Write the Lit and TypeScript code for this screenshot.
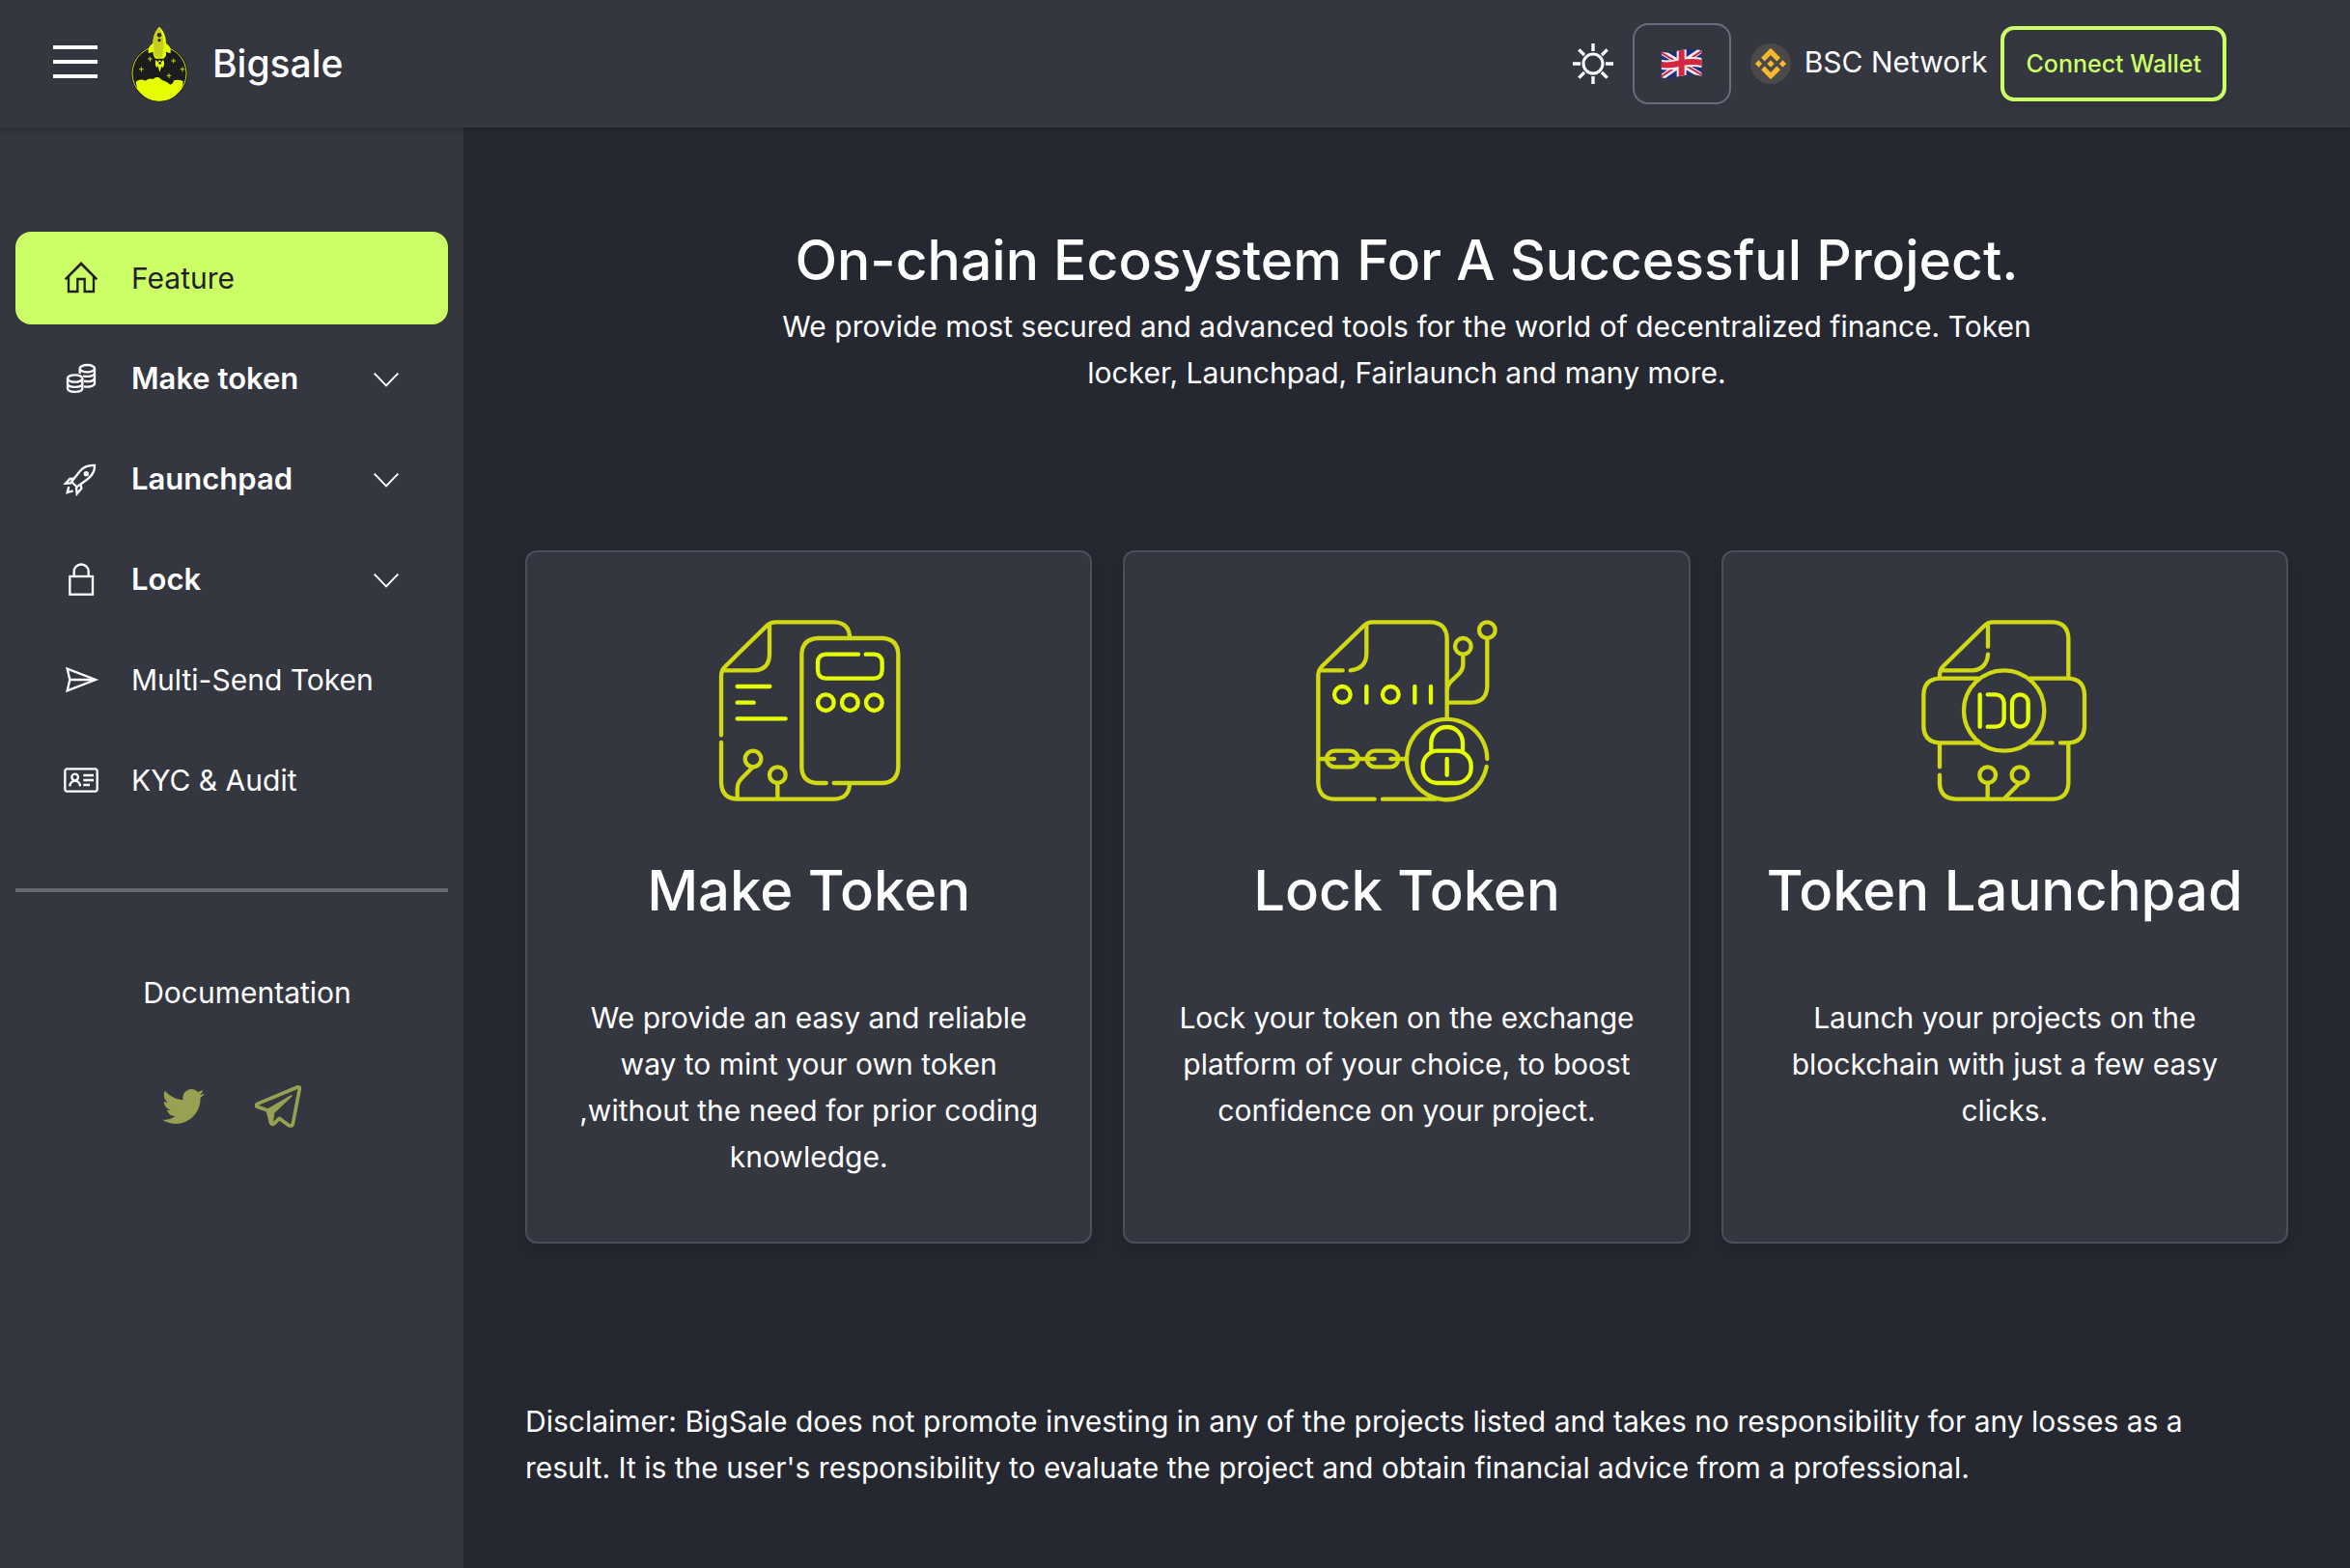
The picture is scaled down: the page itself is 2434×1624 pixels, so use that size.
import { LitElement, html, css, svg, nothing } from "lit";
import type { SVGTemplateResult } from "lit";
import { customElement, property } from "lit/decorators.js";
import { classMap } from "lit/directives/class-map.js";

interface NavItem {
  label: string;
  icon: SVGTemplateResult;
  box: string;
  group?: boolean;
  active?: boolean;
}

interface Feature {
  title: string;
  text: string;
  box: string;
  art: SVGTemplateResult;
}

const NAV: NavItem[] = [
  {
    label: "Feature",
    active: true,
    box: "192 144 120 120",
    icon: svg`<path stroke-width="8" d="M203 208 252 159 301 208"/><path stroke-width="7" d="M213 200V246H241V207H263V246H291V200"/>`,
  },
  {
    label: "Make token",
    group: true,
    box: "192 456 120 120",
    icon: svg`<g stroke-width="7"><ellipse cx="271" cy="485" rx="23" ry="11"/>
      <path d="M248 485V501M294 485V531C294 540 276 544 261 541M294 500C290 509 274 512 258 508M294 515C290 524 276 527 261 524"/>
      <ellipse cx="233" cy="516" rx="23" ry="11"/>
      <path d="M210 516V547C212 561 254 561 256 547V516M210 532C212 546 254 546 256 532" /></g>`,
  },
  {
    label: "Launchpad",
    group: true,
    box: "192 768 120 120",
    icon: svg`<g stroke-width="7"><path d="M294 786C274 785 261 789 249 803L222 837 239 853 273 828C290 814 295 803 294 786Z"/>
      <path d="M231 827 217 828 204 842 222 841M251 843 253 858 239 874 237 854M214 852 209 870 227 865"/></g>
      <circle cx="268" cy="812" r="8" fill="currentColor" stroke="none"/>`,
  },
  {
    label: "Lock",
    group: true,
    box: "192 120 120 120",
    icon: svg`<g stroke-width="7"><rect x="217" y="171" width="71" height="56"/><path d="M230 171V156a22 22 0 0 1 45 0V171"/></g>`,
  },
  {
    label: "Multi-Send Token",
    box: "192 432 120 120",
    icon: svg`<path stroke-width="7" d="M209 458 297 492 209 526 217 492ZM217 492H292"/>`,
  },
  {
    label: "KYC & Audit",
    box: "192 744 120 120",
    icon: svg`<g stroke-width="7"><rect x="202" y="769" width="100" height="70" rx="7"/><circle cx="233" cy="795" r="10"/>
      <path d="M217 823C218 812 224 807 233 806C242 807 248 812 249 823M259 789H291M259 804H291M259 819H279"/></g>`,
  },
];

const FEATURES: Feature[] = [
  {
    title: "Make Token",
    text: "We provide an easy and reliable way to mint your own token ,without the need for prior coding knowledge.",
    box: "64 60 576 576",
    art: svg`<g class="dim">
      <path d="M79 424V240Q79 224 90 212L222 83Q232 73 248 73H430Q478 75 478 122M229 80V175Q227 222 180 223H86"/>
      <path d="M79 447V572Q81 622 130 623H430Q476 621 478 576"/>
      <path d="M405 573H378Q330 571 329 523V173Q331 125 380 123H580Q627 125 629 173V523Q627 571 580 573H429"/>
      <circle cx="178" cy="498" r="25"/><circle cx="254" cy="548" r="25"/>
      <path d="M178 523 143 558Q129 572 129 590V620M254 575V620"/></g>
      <g class="lit"><path d="M505 173H404Q380 174 379 198V222Q380 247 404 248H554Q578 247 579 222V198Q578 174 554 173H528"/>
      <circle cx="404" cy="323" r="25"/><circle cx="479" cy="323" r="25"/><circle cx="554" cy="323" r="25"/>
      <path d="M129 273H230M129 323H180M129 373H279"/></g>`,
  },
  {
    title: "Lock Token",
    text: "Lock your token on the exchange platform of your choice, to boost confidence on your project.",
    box: "63 60 576 576",
    art: svg`<g class="dim">
      <path d="M476 370V123Q474 75 426 73H244Q229 73 218 84L88 210Q76 222 76 240V573Q78 621 126 623H251M276 623H440"/>
      <path d="M226 80V173Q224 218 176 223M152 223H84"/>
      <circle cx="526" cy="148" r="25"/><circle cx="601" cy="98" r="25"/>
      <path d="M526 175V205Q526 220 515 232L490 256Q477 269 477 282M601 125V273Q599 321 551 323H480"/>
      <path d="M601 498A125 125 0 1 0 599 522"/>
      <rect x="102" y="473" width="98" height="50" rx="25"/><rect x="227" y="473" width="98" height="50" rx="25"/>
      <path d="M80 498H126M176 498H251M301 498H350"/></g>
      <g class="lit"><circle cx="151" cy="298" r="25"/><circle cx="301" cy="298" r="25"/>
      <path d="M226 273V323M376 273V323M426 273V323"/>
      <path d="M427 470V448A49 49 0 0 1 525 448V470"/><rect x="401" y="473" width="150" height="100" rx="46"/>
      <path d="M476 498V548"/></g>`,
  },
  {
    title: "Token Launchpad",
    text: "Launch your projects on the blockchain with just a few easy clicks.",
    box: "61 60 576 576",
    art: svg`<g class="dim">
      <path d="M148 244V236Q148 221 159 210L287 84Q298 73 314 73H500Q546 75 548 123V244M298 80V149M298 173C296 205 276 222 250 223H156"/>
      <path d="M268 248H148Q100 250 98 298V398Q100 446 148 448H268M428 248H548Q596 250 598 298V398Q596 446 548 448H523M498 448H430"/>
      <circle cx="348" cy="348" r="125"/>
      <path d="M148 452V523M148 548V575Q150 621 198 623H500Q546 621 548 573V452"/>
      <circle cx="297" cy="548" r="25"/><circle cx="397" cy="548" r="25"/>
      <path d="M297 575V620M396 574 350 620"/></g>
      <g class="lit"><path d="M273 298V398M297 298H322Q346 300 348 323V373Q346 397 322 398H297"/>
      <rect x="373" y="298" width="50" height="100" rx="25"/></g>`,
  },
];

const logo = html`<svg class="logo" viewBox="403 80 180 237" aria-hidden="true">
  <circle cx="493" cy="227" r="88" fill="#1d1f10" />
  <circle cx="493" cy="227" r="84" fill="#1c1c1d" stroke="#cbd612" stroke-width="3" />
  <path fill="#e6ff00" d="M420 253Q434 241 450 250Q462 240 473 245Q482 237 492 240Q500 249 508 250Q518 253 527 262Q536 260 538 249Q552 244 567 251Q567 262 562 274A84 84 0 0 1 424 274Z" />
  <path fill="#e6ff00" d="M430 280H556Q534 313 493 313Q452 313 430 280Z" />
  <path fill="#e6ff00" d="M459 165V151Q461 142 473 133C473 112 481 94 493 82C506 94 514 112 514 133Q526 142 528 151V165L514 160V171Q511 179 506 181H482Q475 177 473 160Z" />
  <path fill="#c6cf1d" d="M493 84C481 96 474 112 474 133L477 168Q480 178 493 178H500Q508 160 506 130Q503 100 493 84Z" />
  <circle cx="493" cy="108" r="7" fill="#2b2d32" /><circle cx="493" cy="124" r="5" fill="#2b2d32" />
  <path fill="#e6ff00" d="M483 184Q477 199 485 209L489 204 494 223 500 205 504 210Q512 197 505 184L500 192 494 185 488 192Z" />
  <circle cx="495" cy="195" r="4" fill="#1c1c1d" />
  <path fill="none" stroke="#cbd612" stroke-width="3" d="M464 175V190M457 182H471M537 181V195M530 188H544M437 207V222M430 214H444M565 207V222M558 214H572M523 227V242M516 234H530" />
</svg>`;

const sun = html`<svg class="sun" viewBox="30 102 126 126" aria-hidden="true">
  <circle cx="93" cy="165" r="30" stroke-width="9" />
  <path stroke-width="10" d="M93 102V126M93 204V228M30 165H54M132 165H156M49 121 66 138M137 121 120 138M49 209 66 192M137 209 120 192" />
</svg>`;

const flag = html`<svg class="flag" viewBox="302 117 132 96" aria-hidden="true">
  <defs>
    <clipPath id="cloth"><path d="M304 128C324 134 344 127 364 123C388 119 410 119 430 124V203C410 198 388 198 364 203C344 208 324 212 304 208Z" /></clipPath>
  </defs>
  <g clip-path="url(#cloth)" fill="none">
    <path fill="#1d2f7c" d="M300 110H434V216H300Z" />
    <path stroke="#f1eef2" stroke-width="17" d="M304 128 430 203M430 122 304 208" />
    <path stroke="#cf2440" stroke-width="6" d="M304 131 367 168M430 200 367 163M430 125 367 168M304 205 367 163" />
    <path stroke="#f1eef2" stroke-width="30" d="M367 110V216M302 167C324 173 344 168 366 163C390 158 412 158 434 163" />
    <path stroke="#d5263f" stroke-width="18" d="M367 110V216M302 167C324 173 344 168 366 163C390 158 412 158 434 163" />
  </g>
</svg>`;

const bnb = html`<svg class="bnb" viewBox="3 3 26 26" aria-hidden="true">
  <circle cx="16" cy="16" r="13" fill="#4b4a49" />
  <path fill="#f6b92c" d="M12.1 14.4 16 10.5l3.9 3.9 2.3-2.3L16 6l-6.1 6.1zM6 16l2.3-2.3 2.2 2.3-2.2 2.3zM12.1 17.6 16 21.5l3.9-3.9 2.3 2.3L16 26l-6.1-6.1zM21.5 16l2.2-2.3L26 16l-2.3 2.3zM13.7 16l2.3-2.3 2.3 2.3-2.3 2.3z" />
</svg>`;

@customElement("top-bar")
export class TopBar extends LitElement {
  static styles = css`
    :host { display: block; }
    .bar {
      display: flex;
      align-items: center;
      justify-content: space-between;
      height: 132px;
      padding: 0 128px 0 54px;
      box-sizing: border-box;
      background: #343640;
      box-shadow: 0 2px 6px rgba(0, 0, 0, 0.2);
    }
    .side { display: flex; align-items: center; }
    button {
      font: inherit;
      color: inherit;
      background: none;
      border: 0;
      padding: 0;
      cursor: pointer;
      display: flex;
      align-items: center;
      justify-content: center;
      box-sizing: border-box;
    }
    .menu svg { width: 48px; height: 48px; stroke: #fff; stroke-width: 4; padding-bottom: 4px; }
    .brand { display: flex; align-items: center; gap: 25px; margin-left: 33px; color: #fff; text-decoration: none; font-size: 39px; font-weight: 500; line-height: 48px; }
    .logo { width: 60px; height: 79px; }
    .tools { gap: 20px; }
    .sun { width: 42px; height: 42px; fill: none; stroke: #fff; }
    .lang { width: 102px; height: 84px; border: 2px solid #6a6d7e; border-radius: 16px; }
    .flag { width: 44px; height: 32px; }
    .network { gap: 14px; line-height: 48px; }
    .bnb { width: 42px; height: 42px; }
    .name { padding-bottom: 4px; }
    .wallet {
      height: 78px;
      padding: 0 22px;
      border: 4px solid #ccff66;
      border-radius: 14px;
      color: #ccff66;
      font-size: 25px;
      font-weight: 500;
      box-shadow: 0 6px 10px rgba(0, 0, 0, 0.08);
    }
    .wallet-wrap { display: flex; margin-left: -6px; }
  `;
  render() {
    return html`<header class="bar">
      <div class="side">
        <button class="menu" aria-label="Toggle menu">
          <svg viewBox="0 0 48 48" aria-hidden="true"><path d="M1 9H47M1 24H47M1 39H47" /></svg>
        </button>
        <a class="brand" href="#">${logo}<span>Bigsale</span></a>
      </div>
      <div class="side tools">
        <button aria-label="Toggle theme">${sun}</button>
        <button class="lang" aria-label="Language">${flag}</button>
        <button class="network">${bnb}<span class="name">BSC Network</span></button>
        <div class="wallet-wrap"><button class="wallet">Connect Wallet</button></div>
      </div>
    </header>`;
  }
}

@customElement("side-nav")
export class SideNav extends LitElement {
  static styles = css`
    :host { display: block; background: #343640; padding: 108px 16px 48px; box-sizing: border-box; }
    .list { list-style: none; margin: 0; padding: 0; display: flex; flex-direction: column; gap: 8px; }
    .item {
      display: flex;
      align-items: center;
      gap: 32px;
      width: 100%;
      height: 96px;
      padding: 0 48px;
      box-sizing: border-box;
      border: 0;
      border-radius: 16px;
      background: none;
      color: #fff;
      font: inherit;
      text-align: left;
      text-decoration: none;
      white-space: nowrap;
      cursor: pointer;
    }
    .active { background: #ccff66; color: #1f2128; }
    .group { font-size: 31px; font-weight: 600; }
    .label { flex: 1; }
    .icon { width: 40px; height: 40px; flex: none; fill: none; stroke: currentColor; }
    .chevron { width: 32px; height: 32px; flex: none; fill: none; stroke: currentColor; stroke-width: 6; }
    .rule { border: 0; height: 4px; margin: 64px 0 80px; background: #676a73; }
    .doc { display: block; padding-left: 32px; text-align: center; color: #fff; text-decoration: none; }
    .social { display: flex; justify-content: center; align-items: center; gap: 52px; margin-top: 70px; color: #98a052; }
    .social a { display: flex; color: inherit; }
    .twitter { width: 44px; height: 44px; fill: currentColor; }
    .telegram { width: 48px; height: 48px; fill: none; stroke: currentColor; stroke-width: 11; stroke-linejoin: round; }
  `;
  private row(n: NavItem) {
    const cls = classMap({ item: true, active: !!n.active, group: !!n.group });
    const inner = html`<svg class="icon" viewBox=${n.box} aria-hidden="true">${n.icon}</svg>
      <span class="label">${n.label}</span>
      ${n.group
        ? html`<svg class="chevron" viewBox="1152 470 96 96" aria-hidden="true"><path d="M1163 502 1200 540 1237 502" /></svg>`
        : nothing}`;
    return html`<li>
      ${n.group
        ? html`<button class=${cls} aria-expanded="false">${inner}</button>`
        : html`<a class=${cls} href="#">${inner}</a>`}
    </li>`;
  }
  render() {
    return html`<nav>
      <ul class="list">${NAV.map((n) => this.row(n))}</ul>
      <hr class="rule" />
      <a class="doc" href="#">Documentation</a>
      <div class="social">
        <a href="#" aria-label="Twitter"><svg class="twitter" viewBox="0 0 24 24"><path d="M23.953 4.57a10 10 0 01-2.825.775 4.958 4.958 0 002.163-2.723c-.951.555-2.005.959-3.127 1.184a4.92 4.92 0 00-8.384 4.482C7.69 8.095 4.067 6.13 1.64 3.162a4.822 4.822 0 00-.666 2.475c0 1.71.87 3.213 2.188 4.096a4.904 4.904 0 01-2.228-.616v.06a4.923 4.923 0 003.946 4.827 4.996 4.996 0 01-2.212.085 4.936 4.936 0 004.604 3.417 9.867 9.867 0 01-6.102 2.105c-.39 0-.779-.023-1.17-.067a13.995 13.995 0 007.557 2.209c9.053 0 13.998-7.496 13.998-13.985 0-.21 0-.42-.015-.63A9.935 9.935 0 0024 4.59z" /></svg></a>
        <a href="#" aria-label="Telegram"><svg class="telegram" viewBox="793 726 144 144">
          <path d="M925 738 800 790Q794 795 800 799L833 810 843 850Q847 856 853 851L869 835 899 857Q908 860 911 852L932 743Q933 736 925 738Z" />
          <path fill="currentColor" stroke="none" d="M834 804 906 762Q911 763 908 767L854 818 850 846 843 850Z" />
        </svg></a>
      </div>
    </nav>`;
  }
}

@customElement("feature-card")
export class FeatureCard extends LitElement {
  @property({ attribute: false }) feature!: Feature;
  static styles = css`
    :host { display: block; }
    .card {
      height: 100%;
      box-sizing: border-box;
      display: flex;
      flex-direction: column;
      align-items: center;
      padding: 68px 32px 64px;
      background: #343640;
      border: 2px solid #4c4f5b;
      border-radius: 12px;
      box-shadow: 0 8px 16px rgba(0, 0, 0, 0.14);
      text-align: center;
    }
    .art { width: 192px; height: 192px; fill: none; stroke-width: 13; stroke-linecap: round; }
    .dim { stroke: #d0d911; }
    .lit { stroke: #e6ff00; }
    .title { margin: 46px 0 64px; font-size: 58px; line-height: 88px; font-weight: 500; white-space: nowrap; }
    .text { margin: 0; padding: 0 16px; }
  `;
  render() {
    const f = this.feature;
    return html`<article class="card">
      <svg class="art" viewBox=${f.box} aria-hidden="true">${f.art}</svg>
      <h2 class="title">${f.title}</h2>
      <p class="text">${f.text}</p>
    </article>`;
  }
}

@customElement("app-root")
export class AppRoot extends LitElement {
  static styles = css`
    :host {
      display: flex;
      flex-direction: column;
      min-height: 100vh;
      background: #252831;
      color: #fff;
      font-family: Inter, "Open Sans", sans-serif;
      font-size: 30px;
      line-height: 48px;
    }
    .top { position: relative; z-index: 1; }
    .body { flex: 1; display: grid; grid-template-columns: 480px minmax(0, 1fr); }
    .main { padding: 94px 64px 80px; }
    .hero { text-align: center; }
    .headline { margin: 0; font-size: 57px; line-height: 88px; font-weight: 500; }
    .lead { margin: 0 auto; max-width: 1344px; }
    .cards { display: grid; grid-template-columns: repeat(3, minmax(0, 1fr)); gap: 32px; margin: 160px 0; }
    .disclaimer { margin: 0; max-width: 1776px; }
  `;
  render() {
    return html`<top-bar class="top"></top-bar>
      <div class="body">
        <side-nav></side-nav>
        <main class="main">
          <section class="hero">
            <h1 class="headline">On-chain Ecosystem For A Successful Project.</h1>
            <p class="lead">We provide most secured and advanced tools for the world of decentralized finance. Token locker, Launchpad, Fairlaunch and many more.</p>
          </section>
          <section class="cards">${FEATURES.map((f) => html`<feature-card .feature=${f}></feature-card>`)}</section>
          <p class="disclaimer">Disclaimer: BigSale does not promote investing in any of the projects listed and takes no responsibility for any losses as a result. It is the user's responsibility to evaluate the project and obtain financial advice from a professional.</p>
        </main>
      </div>`;
  }
}
